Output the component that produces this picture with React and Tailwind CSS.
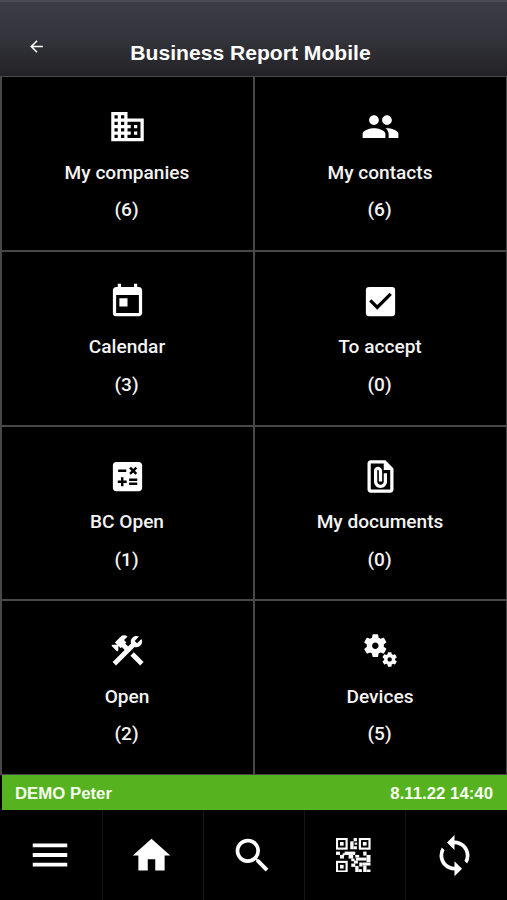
import {
  MdArrowBack,
  MdCalculate,
  MdCheckBox,
  MdConstruction,
  MdDomain,
  MdFilePresent,
  MdHome,
  MdMenu,
  MdMiscellaneousServices,
  MdPeople,
  MdSearch,
  MdSync,
  MdToday,
} from "react-icons/md";

const tiles = [
  { label: "My companies", count: 6, Icon: MdDomain },
  { label: "My contacts", count: 6, Icon: MdPeople },
  { label: "Calendar", count: 3, Icon: MdToday },
  { label: "To accept", count: 0, Icon: MdCheckBox },
  { label: "BC Open", count: 1, Icon: MdCalculate },
  { label: "My documents", count: 0, Icon: MdFilePresent },
  { label: "Open", count: 2, Icon: MdConstruction },
  { label: "Devices", count: 5, Icon: MdMiscellaneousServices },
];

// top left corners of the three finder squares
const qrFinders = [
  [0, 0],
  [69, 0],
  [0, 69],
];

// x, y, width, height
const qrBlocks = [
  [53, 0, 10, 10],
  [43, 10, 10, 24],
  [53, 25, 10, 9],
  [56, 14, 8, 6],
  [0, 41, 12, 10],
  [12, 51, 12, 11],
  [26, 41, 32, 10],
  [38, 51, 14, 11],
  [20, 46, 8, 6],
  [58, 51, 12, 8],
  [82, 41, 10, 12],
  [92, 51, 12, 22],
  [46, 62, 10, 8],
  [60, 59, 32, 9],
  [54, 68, 12, 9],
  [46, 77, 12, 10],
  [58, 84, 10, 20],
  [68, 94, 10, 10],
  [70, 74, 10, 12],
  [80, 74, 24, 9],
  [82, 83, 10, 21],
  [92, 95, 12, 9],
];

const QrIcon = () => (
  <svg width="34.5" height="34.5" viewBox="0 0 104 104" fill="currentColor">
    {qrFinders.map(([x, y]) => (
      <g key={`${x}-${y}`}>
        <rect x={x + 3} y={y + 3} width="29" height="29" fill="none" stroke="currentColor" strokeWidth="6.5" />
        <rect x={x + 12} y={y + 12} width="11" height="11" />
      </g>
    ))}
    {qrBlocks.map(([x, y, w, h]) => (
      <rect key={`${x}-${y}`} x={x} y={y} width={w} height={h} />
    ))}
  </svg>
);

const navItems = [
  { name: "Menu", icon: <MdMenu size={46} /> },
  { name: "Home", icon: <MdHome size={45} /> },
  { name: "Search", icon: <MdSearch size={45} /> },
  { name: "Scan", icon: <QrIcon /> },
  { name: "Sync", icon: <MdSync size={45} /> },
];

const Tile = ({ label, count, Icon }) => (
  <button className="flex flex-col items-center bg-black pt-[30px] text-[19.1px] leading-6 font-medium text-[#f4f4f4]">
    <Icon size={39} className="text-white" />
    <span className="mt-[14.5px] mr-px">{label}</span>
    <span className="mt-[13.5px] mr-[2px]">({count})</span>
  </button>
);

const App = () => (
  <div className="flex h-[900px] w-[507px] flex-col overflow-hidden bg-black font-['Roboto',sans-serif] text-white">
    <header className="flex h-[76px] shrink-0 items-start border-t-2 border-[#4a4a54] bg-linear-to-b from-[#3c3c46] via-[#33333b] to-[#222226]">
      <button className="mt-[35px] ml-[27px] w-[17px]">
        <MdArrowBack size={19} />
      </button>
      <h1 className="mt-[37.5px] mr-[50px] flex-1 text-center font-['Liberation_Sans',sans-serif] text-[21.1px] leading-[26px] font-bold">
        Business Report Mobile
      </h1>
    </header>

    <main className="grid h-[699px] shrink-0 grid-cols-2 grid-rows-4 gap-[2px] bg-[#484848] py-px pr-px pl-[2px]">
      {tiles.map((tile) => (
        <Tile key={tile.label} {...tile} />
      ))}
    </main>

    <div className="ml-0.5 flex h-[35px] shrink-0 items-center justify-between bg-[#56b21e] pt-[2px] pr-[14px] pl-[13px] font-['Liberation_Sans',sans-serif] text-[16.8px] font-bold text-[#f6fff0]">
      <span>DEMO Peter</span>
      <span>8.11.22 14:40</span>
    </div>

    <nav className="grid flex-1 grid-cols-5 px-px">
      {navItems.map((item) => (
        <button
          key={item.name}
          aria-label={item.name}
          className="flex items-center justify-center border-l border-[#161616] pr-[3px] first:border-l-0"
        >
          {item.icon}
        </button>
      ))}
    </nav>
  </div>
);

export default App;
